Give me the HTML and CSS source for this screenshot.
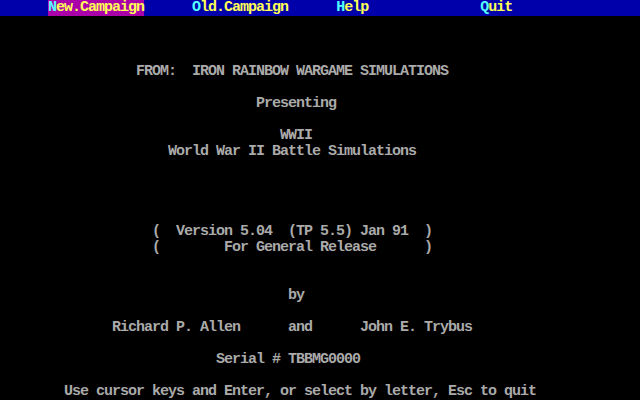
FILE: index.html
```html
<!DOCTYPE html>
<html>
<head>
<meta charset="utf-8">
<link rel="stylesheet" href="styles.css">
</head>
<body>
<div class="screen">
<div class="row menu">      <span class="sel"><span class="key">N</span>ew.Campaign</span>      <span class="key">O</span>ld.Campaign      <span class="key">H</span>elp              <span class="key">Q</span>uit</div>
<div class="row"> </div>
<div class="row"> </div>
<div class="row"> </div>
<div class="row">                 FROM:  IRON RAINBOW WARGAME SIMULATIONS</div>
<div class="row"> </div>
<div class="row">                                Presenting</div>
<div class="row"> </div>
<div class="row">                                   WWII</div>
<div class="row">                     World War II Battle Simulations</div>
<div class="row"> </div>
<div class="row"> </div>
<div class="row"> </div>
<div class="row"> </div>
<div class="row">                   (  Version 5.04  (TP 5.5) Jan 91  )</div>
<div class="row">                   (        For General Release      )</div>
<div class="row"> </div>
<div class="row"> </div>
<div class="row">                                    by</div>
<div class="row"> </div>
<div class="row">              Richard P. Allen      and      John E. Trybus</div>
<div class="row"> </div>
<div class="row">                           Serial # TBBMG0000</div>
<div class="row"> </div>
<div class="row">        Use cursor keys and Enter, or select by letter, Esc to quit</div>
</div>
</body>
</html>
```
FILE: styles.css
```css
html, body {
  margin: 0;
  padding: 0;
  background: #000000;
}
.screen {
  width: 640px;
  height: 400px;
  overflow: hidden;
  background: #000000;
  color: #aaaaaa;
  font-family: "Liberation Mono", "DejaVu Sans Mono", monospace;
  font-size: 15px;
  letter-spacing: -1px;
  font-weight: bold;
}
.row {
  height: 16px;
  line-height: 16px;
  white-space: pre;
}
.menu {
  background: #0000aa;
  color: #ffff55;
}
.sel {
  background: #aa00aa;
}
.key {
  color: #55ffff;
}
```
